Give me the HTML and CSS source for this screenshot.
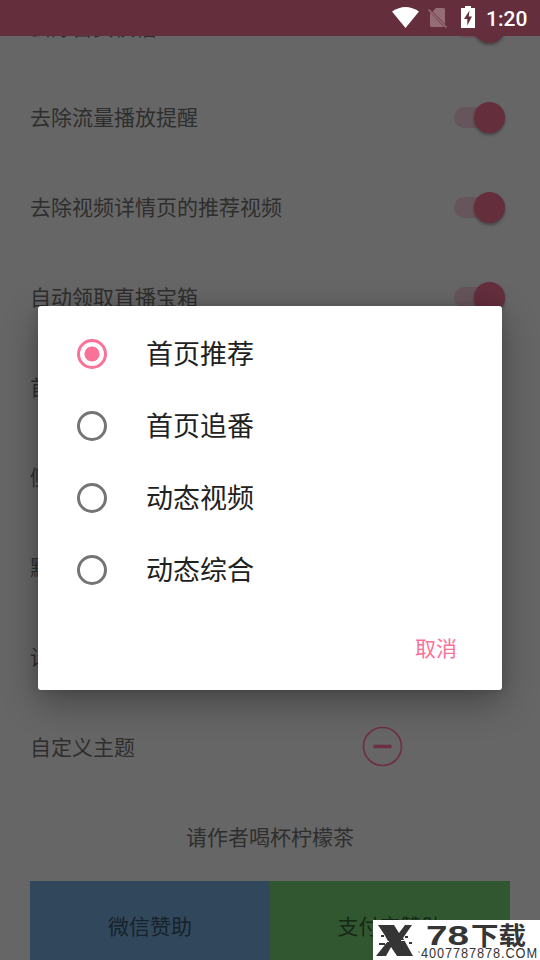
FILE: index.html
```html
<!DOCTYPE html>
<html lang="zh-CN">
<head>
<meta charset="utf-8">
<title>设置</title>
<link rel="stylesheet" href="styles.css">
</head>
<body>
<div class="screen">
  <main class="settings">
    <div class="row"><span>去除首页横幅</span><i class="switch"></i></div>
    <div class="row"><span>去除流量播放提醒</span><i class="switch"></i></div>
    <div class="row"><span>去除视频详情页的推荐视频</span><i class="switch"></i></div>
    <div class="row"><span>自动领取直播宝箱</span><i class="switch"></i></div>
    <div class="row"><span>首</span></div>
    <div class="row"><span>侧</span></div>
    <div class="row"><span>默</span></div>
    <div class="row"><span>设</span></div>
    <div class="row theme"><span>自定义主题</span>
      <svg class="minus" width="42" height="42" viewBox="0 0 42 42"><circle cx="21.500" cy="20.500" r="19"/><path d="M12.500 20.500H30.500"/></svg>
    </div>
    <div class="row tea"><span>请作者喝杯柠檬茶</span></div>
    <div class="sponsors"><div class="wechat">微信赞助</div><div class="alipay">支付宝赞助</div></div>
  </main>
  <header class="status">
    <svg width="178" height="36" viewBox="362 0 178 36">
      <path fill="#fff" d="M392 11.500Q405.500 2.500 419 11.500L405.500 28Z"/>
      <path fill="#956d77" d="M436 8H443.500Q445 8 445 9.500V24L432.500 11.500ZM430 12.500L444 27H431.500Q430 27 430 25.500Z"/>
      <path stroke="#956d77" stroke-width="1.700" d="M428.500 9.500L446.500 27.500"/>
      <path fill="#fff" d="M461 8H465V6H471V8H475V28H461Z"/>
      <path fill="#642e3d" d="M469.500 10.500L464 19H467.300V25.500L472 16.500H468.800Z"/>
    </svg>
    <time>1:20</time>
  </header>
  <section class="dialog">
    <div class="option"><i class="radio checked"></i><span>首页推荐</span></div>
    <div class="option"><i class="radio"></i><span>首页追番</span></div>
    <div class="option"><i class="radio"></i><span>动态视频</span></div>
    <div class="option"><i class="radio"></i><span>动态综合</span></div>
    <div class="cancel">取消</div>
  </section>
  <aside class="watermark">
    <svg width="167" height="40" viewBox="0 0 167 40">
      <path fill="#353535" d="M5 5H21L26 13L32 5H39L30 18L40 36H24L18 27L13 36H3L15 21L11 14Z"/>
      <path fill="#353535" d="M8 15H11V17H8ZM6 23H12V25H6ZM32 16H35V18H32ZM36 22H39V24H36Z"/>
      <path stroke="#fff" stroke-width="1" d="M3 21.500H16M28 20.500H40"/>
      <text class="digits" x="53" y="25" textLength="43" lengthAdjust="spacingAndGlyphs">78</text>
      <text class="brand" x="98" y="25" textLength="55" lengthAdjust="spacingAndGlyphs">下载</text>
      <text class="site" x="48" y="37.500" textLength="117" lengthAdjust="spacingAndGlyphs">4007787878.COM</text>
      <circle cx="46" cy="32" r="1" fill="#bbb"/>
    </svg>
  </aside>
</div>
</body>
</html>
```
FILE: styles.css
```css
* { box-sizing: border-box; }
body { margin: 0; }
.screen {
  position: relative;
  width: 540px;
  height: 960px;
  overflow: hidden;
  background: #666;
  color: #2e2e2e;
  font: 21px/30px "Noto Sans CJK SC", sans-serif;
}
.settings { display: flow-root; margin-top: -18px; padding: 0 30px; }
.row { display: flex; align-items: center; justify-content: space-between; height: 90px; }
.row span { padding-bottom: 2px; }
.switch {
  display: flex;
  justify-content: flex-end;
  align-items: center;
  width: 51px;
  height: 21px;
  margin-right: 5px;
  border-radius: 11px;
  background: #66565b;
}
.switch::after {
  content: "";
  width: 31px;
  height: 31px;
  border-radius: 50%;
  background: #642e3d;
  box-shadow: 0 2px 3px #0005;
}
.theme .minus { margin-right: 107px; }
.minus { fill: none; stroke: #6f2f43; stroke-width: 1.7; }
.minus path { stroke-width: 3.500; }
.tea { justify-content: center; height: 89px; }
.sponsors { display: flex; height: 90px; line-height: 88px; text-align: center; }
.sponsors div { flex: 1; }
.wechat { background: #31485c; color: #16212a; }
.alipay { background: #315731; color: #162816; }
.status {
  position: absolute;
  inset: 0 0 auto;
  display: flex;
  justify-content: flex-end;
  height: 36px;
  background: #642e3d;
}
.status svg { flex: none; }
.status time {
  position: absolute;
  left: 486px;
  top: 1px;
  color: #fff;
  font: 500 21px/36px Roboto, sans-serif;
}
.dialog {
  position: absolute;
  left: 38px;
  top: 306px;
  width: 464px;
  height: 384px;
  padding-top: 12px;
  border-radius: 3px;
  background: #fff;
  color: #212121;
  box-shadow: 0 12px 36px #0005, 0 0 10px #0002;
}
.option { display: flex; align-items: center; gap: 39px; height: 72px; padding-left: 39px; font-size: 27px; }
.option span { padding-bottom: 2px; }
.radio { width: 30px; height: 30px; border: 3px solid #757575; border-radius: 50%; }
.radio.checked { border-color: #fb7299; background: radial-gradient(circle, #fb7299 7.200px, transparent 7.800px); }
.cancel { padding: 25px 45px 0 0; color: #fb7299; text-align: right; line-height: 32px; }
.watermark { position: absolute; right: 0; bottom: 0; width: 167px; height: 40px; background: #fff; }
.watermark svg { display: block; }
.digits { font: 700 27px "Liberation Sans", sans-serif; fill: #353535; }
.brand { font: 700 25px "Noto Sans CJK SC", sans-serif; fill: #353535; }
.site { font: 14px "Liberation Sans", sans-serif; fill: #353535; letter-spacing: 1px; }
```
